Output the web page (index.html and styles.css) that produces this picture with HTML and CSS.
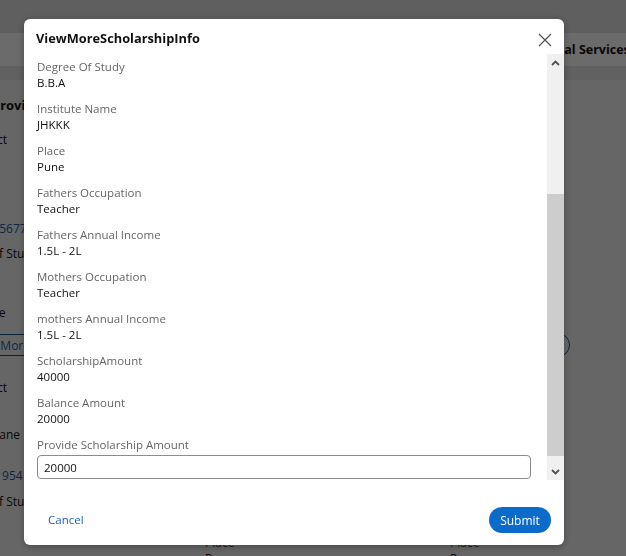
FILE: index.html
```html
<!DOCTYPE html>
<html>
<head>
<meta charset="utf-8">
<link rel="stylesheet" href="styles.css">
</head>
<body>
<div class="page">
  <div class="topbar"></div>
  <div class="nav"><span class="nav-item">Educational Services</span></div>
  <div class="subbar"></div>
  <div class="main">
    <div class="lcol">
      <div class="ln l1 bold">Provide Scholarship</div>
      <div class="ln l2">Subject</div>
      <div class="ln l3 link">9876545677</div>
      <div class="ln l4">Type of Student</div>
      <div class="ln l5">Name</div>
      <div class="more-row">
        <span class="more-btn">View More</span>
        <span class="circle"></span>
      </div>
      <div class="ln l7">Subject</div>
      <div class="ln l8">Jane</div>
      <div class="ln l9 link">9876541954</div>
      <div class="ln l10">Type of Student</div>
    </div>
    <div class="detail-row">
      <div class="dcol"><div class="dl">Place</div><div class="dv">Pune</div></div>
      <div class="dcol"><div class="dl">Place</div><div class="dv">Pune</div></div>
    </div>
  </div>
</div>
<div class="overlay"></div>
<div class="modal">
  <div class="mhead">
    <span class="title">ViewMoreScholarshipInfo</span>
    <svg class="close" width="14" height="14" viewBox="0 0 14 14"><path d="M1 1L13 13M13 1L1 13" stroke="#555" stroke-width="1.3" fill="none"/></svg>
  </div>
  <div class="mbody">
    <div class="content">
      <div class="field"><div class="label">Degree Of Study</div><div class="value">B.B.A</div></div>
      <div class="field"><div class="label">Institute Name</div><div class="value">JHKKK</div></div>
      <div class="field"><div class="label">Place</div><div class="value">Pune</div></div>
      <div class="field"><div class="label">Fathers Occupation</div><div class="value">Teacher</div></div>
      <div class="field"><div class="label">Fathers Annual Income</div><div class="value">1.5L - 2L</div></div>
      <div class="field"><div class="label">Mothers Occupation</div><div class="value">Teacher</div></div>
      <div class="field"><div class="label">mothers Annual Income</div><div class="value">1.5L - 2L</div></div>
      <div class="field"><div class="label">ScholarshipAmount</div><div class="value">40000</div></div>
      <div class="field"><div class="label">Balance Amount</div><div class="value">20000</div></div>
      <div class="field"><div class="label">Provide Scholarship Amount</div><div class="input">20000</div></div>
    </div>
    <div class="scrollbar">
      <div class="arrow"><svg width="9" height="6" viewBox="0 0 9 6"><path d="M1 5L4.5 1.5L8 5" stroke="#505050" stroke-width="1.8" fill="none"/></svg></div>
      <div class="thumb"></div>
      <div class="arrow"><svg width="9" height="6" viewBox="0 0 9 6"><path d="M1 1L4.5 4.5L8 1" stroke="#505050" stroke-width="1.8" fill="none"/></svg></div>
    </div>
  </div>
  <div class="mfoot">
    <span class="cancel">Cancel</span>
    <span class="submit">Submit</span>
  </div>
</div>
</body>
</html>
```
FILE: styles.css
```css
* { box-sizing: border-box; }
html, body { margin: 0; height: 100%; }
body {
  font-family: "Open Sans", "Liberation Sans", sans-serif;
  font-size: 12px;
  overflow: hidden;
  background: #f4f4f4;
  color: #111;
}
.page { width: 626px; height: 556px; overflow: hidden; }
.topbar { height: 33px; background: #e2e2e2; }
.nav {
  height: 33px;
  background: #fff;
  display: flex;
  align-items: center;
  padding-left: 502px;
  white-space: nowrap;
  font-weight: 700;
  font-size: 12.5px;
}
.subbar { height: 14px; background: #e6e6e6; }
.main { position: relative; }
.lcol { display: flex; flex-direction: column; }
.ln { line-height: 16px; white-space: nowrap; }
.bold { font-weight: 700; font-size: 13px; }
.link { color: #1a5fa8; }
.l1 { margin-top: 17px; margin-left: -8px; }
.l2 { margin-top: 19px; margin-left: -34px; }
.l3 { margin-top: 73px; margin-left: -42px; }
.l4 { margin-top: 9px; margin-left: -38px; }
.l5 { margin-top: 43px; margin-left: -28px; }
.more-row { margin-top: 12px; display: flex; align-items: center; justify-content: space-between; padding-right: 56px; }
.more-btn {
  height: 22px;
  display: flex;
  align-items: center;
  border: 1px solid #1a4f8a;
  border-radius: 3px;
  color: #1a5fa8;
  padding: 0 6px 0 36px;
  margin-left: -66px;
}
.circle { width: 24px; height: 24px; border: 1.5px solid #1a4f8a; border-radius: 50%; }
.l7 { margin-top: 23px; margin-left: -34px; }
.l8 { margin-top: 31px; margin-left: -4px; }
.l9 { margin-top: 25px; margin-left: -46px; }
.l10 { margin-top: 10px; margin-left: -38px; }
.detail-row { display: flex; gap: 194px; padding-left: 205px; margin-top: 25px; }
.dcol { width: 51px; }
.dl { color: #555; line-height: 16px; }
.dv { line-height: 16px; }

.overlay { position: fixed; inset: 0; background: rgba(0, 0, 0, 0.58); }

.modal {
  position: fixed;
  left: 24px;
  top: 19px;
  width: 540px;
  height: 526px;
  background: #fff;
  border-radius: 6px;
  display: flex;
  flex-direction: column;
  box-shadow: 0 2px 8px rgba(0, 0, 0, 0.3);
  overflow: hidden;
}
.mhead {
  height: 35px;
  display: flex;
  align-items: center;
  justify-content: space-between;
  padding: 2px 12px 0 12px;
}
.title { font-weight: 700; font-size: 12.8px; color: #111; }
.close { margin-top: 4px; }
.mbody { height: 426px; display: flex; overflow: hidden; }
.content { flex: 1; padding: 5px 16px 0 13px; font-size: 11.5px; }
.field { margin-bottom: 10px; }
.label { color: #666; line-height: 16px; }
.value { color: #111; line-height: 16px; }
.input {
  margin-top: 2px;
  height: 24px;
  border: 1px solid #8c8c8c;
  border-radius: 4px;
  padding: 0 6px;
  display: flex;
  align-items: center;
  color: #111;
}
.scrollbar { width: 17px; background: #f0f0f0; display: flex; flex-direction: column; }
.arrow { height: 17px; display: flex; align-items: center; justify-content: center; }
.thumb { height: 262px; background: #cdcdcd; margin-top: 123px; margin-bottom: 7px; }
.mfoot {
  flex: 1;
  display: flex;
  align-items: flex-end;
  justify-content: space-between;
  padding: 0 13px 12px 13px;
}
.cancel { color: #1a64b8; padding: 2px 11px 0 11px; line-height: 26px; font-size: 11.5px; }
.submit {
  background: #0b6bcb;
  color: #fff;
  height: 26px;
  width: 62px;
  border-radius: 13px;
  display: flex;
  align-items: center;
  justify-content: center;
  font-size: 12px;
}
```
